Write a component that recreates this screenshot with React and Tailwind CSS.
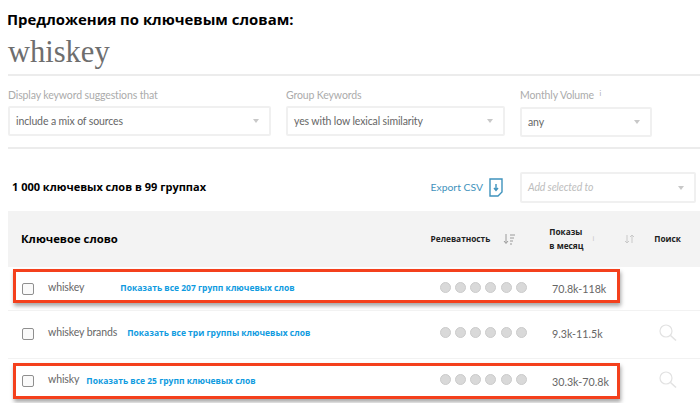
import React from "react";

const Caret = () => (
  <span className="w-0 h-0 border-l-[3.5px] border-r-[3.5px] border-t-[4px] border-l-transparent border-r-transparent border-t-[#c8c8c8]" />
);

const Select = ({ className, children, italic }) => (
  <div className={`flex items-center justify-between bg-white border-2 border-[#f0f0f0] rounded-[2px] pl-[6px] pr-[10px] text-[10.5px] tracking-[-0.12px] ${italic ? "italic text-[#bdbdbd]" : "text-[#666]"} ${className}`}>
    <span className="pt-[1px]">{children}</span>
    <Caret />
  </div>
);

const Dots = () => (
  <div className="flex gap-[4.3px] -mt-[2px]">
    {[0, 1, 2, 3, 4, 5].map((i) => (
      <span key={i} className="w-[11px] h-[11px] rounded-full bg-[#d9d9d9] border border-[#cbcbcb]" />
    ))}
  </div>
);

const SearchIcon = () => (
  <svg width="18" height="18" viewBox="0 0 18 18" fill="none" stroke="#e2e2e2" strokeWidth="1.2">
    <circle cx="7" cy="7" r="6" />
    <path d="M11.5 11.5 L17 16.5" strokeWidth="1.6" />
  </svg>
);

const Row = ({ word, link, gap, volume, search, highlight, height, boxClass, center }) => (
  <div className={`relative flex items-center ${height} ${center}`}>
    <span className="ml-[14px] w-[12px] h-[12px] shrink-0 border border-[#8f8f8f] rounded-[2px] bg-[#fafafa]" />
    <span className="ml-[14px] text-[10.5px] -mt-[2px] text-[#666] tracking-[-0.1px] whitespace-nowrap">{word}</span>
    <a className={`${gap} text-[8.5px] font-bold text-[#0f9be0] whitespace-nowrap font-['Open_Sans',sans-serif]`}>{link}</a>
    <div className="ml-auto flex items-center">
      <Dots />
      <span className="ml-[25px] mt-[2px] w-[107px] text-[10.7px] text-[#666]">{volume}</span>
      <span className="w-[41px] h-[18px] -mt-[1px]">{search && <SearchIcon />}</span>
    </div>
    {highlight && (
      <div className={`absolute border-[3px] border-[#f4401c] shadow-[1px_3px_4px_rgba(0,0,0,0.35)] pointer-events-none ${boxClass}`} />
    )}
  </div>
);

export default function App() {
  return (
    <div className="w-[700px] h-[403px] overflow-hidden bg-white font-['Lato',sans-serif]">
      <h1 className="pl-[7px] pt-[9px] h-[35px] text-[14.9px] leading-[21px] font-bold text-black font-['Open_Sans',sans-serif]">
        Предложения по ключевым словам:
      </h1>
      <div className="ml-[8px] h-[31px] text-[30.5px] leading-[34px] text-[#6e6e6e] font-['Liberation_Serif',serif]">
        whiskey
      </div>
      <div className="ml-[8px] mt-[8px] border-t-2 border-[#ececec]" />

      <div className="ml-[8px] flex gap-[15px] mt-[11px] text-[10.5px] tracking-[-0.12px] text-[#ababab]">
        <div className="w-[263px]">
          <div className="h-[19px] leading-[16px]">Display keyword suggestions that</div>
          <Select className="h-[30px]">include a mix of sources</Select>
        </div>
        <div className="w-[219px]">
          <div className="h-[19px] leading-[16px]">Group Keywords</div>
          <Select className="h-[30px]">yes with low lexical similarity</Select>
        </div>
        <div className="w-[132px]">
          <div className="h-[20px] leading-[16px]">
            Monthly Volume <sup className="ml-[3px] text-[7px]">i</sup>
          </div>
          <Select className="h-[30px]">any</Select>
        </div>
      </div>
      <div className="ml-[8px] mt-[10px] border-t-2 border-[#ececec]" />

      <div className="ml-[12px] mt-[23px] flex items-center h-[31px]">
        <span className="text-[11px] font-bold text-black font-['Open_Sans',sans-serif]">1 000 ключевых слов в 99 группах</span>
        <span className="ml-auto text-[10.4px] text-[#3f93bd]">Export CSV</span>
        <svg className="ml-[6px]" width="14" height="19" viewBox="0 0 14 19" fill="none" stroke="#3f93bd" strokeWidth="1.4">
          <path d="M1 1 H13 V14 L9 18 H1 Z" />
          <path d="M7 6 V12 M5 10 L7 12.5 L9 10" />
        </svg>
        <Select italic className="ml-[17px] mr-[4px] w-[176px] h-[31px]">Add selected to</Select>
      </div>

      <div className="ml-[8px] mt-[8px]">
        <div className="flex items-center h-[56px] bg-[#f3f3f3] text-black">
          <span className="ml-[13px] text-[11.3px] font-bold font-['Open_Sans',sans-serif]">Ключевое слово</span>
          <div className="ml-auto flex items-center font-['Open_Sans',sans-serif] text-[8.3px] font-bold text-[#222]">
            <span>Релеватность</span>
            <svg className="ml-[13px]" width="13" height="12" viewBox="0 0 13 12" fill="none" stroke="#9a9a9a" strokeWidth="1">
              <path d="M3 1 V10 M1 8 L3 10.5 L5 8 M7 2 H12 M7 5 H11 M7 8 H10 M7 11 H9" />
            </svg>
            <span className="ml-[33px] w-[40px] leading-[14px]">Показы<br />в месяц</span>
            <span className="w-[5px] text-[7px] font-normal text-[#c4c4c4] text-right">i</span>
            <svg className="ml-[30px]" width="11" height="10" viewBox="0 0 11 10" fill="none" stroke="#c9c9c9" strokeWidth="1">
              <path d="M3 1 V9 M1 7 L3 9 L5 7 M8 9 V1 M6 3 L8 1 L10 3" />
            </svg>
            <span className="ml-[19px] mr-[19px]">Поиск</span>
          </div>
        </div>
        <Row height="h-[43px]" word="whiskey" gap="ml-[36px]" link="Показать все 207 групп ключевых слов" volume="70.8k-118k" highlight boxClass="left-[5px] top-[2px] w-[607px] h-[34px]" />
        <Row height="h-[49px]" center="border-t border-b border-[#f2f2f2] pb-[2px]" word="whiskey brands" gap="ml-[10px]" link="Показать все три группы ключевых слов" volume="9.3k-11.5k" search />
        <Row height="h-[44px]" word="whisky" gap="ml-[7px]" link="Показать все 25 групп ключевых слов" volume="30.3k-70.8k" search highlight boxClass="left-[5px] top-[4px] w-[607px] h-[36px]" />
      </div>
    </div>
  );
}
